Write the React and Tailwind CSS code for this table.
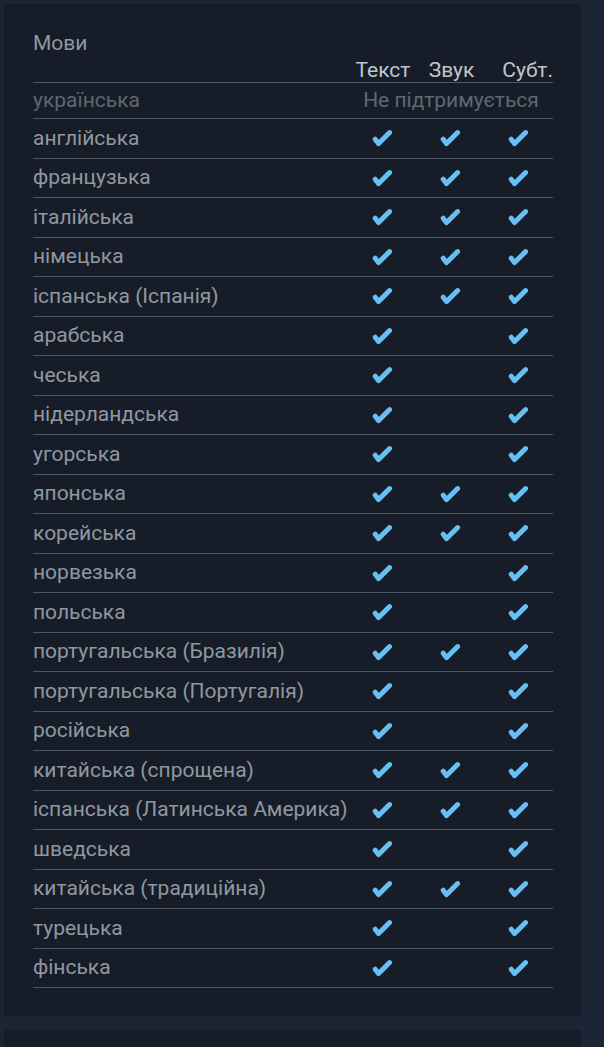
import React from 'react';

const rows = [
  ['англійська', true, true, true],
  ['французька', true, true, true],
  ['італійська', true, true, true],
  ['німецька', true, true, true],
  ['іспанська (Іспанія)', true, true, true],
  ['арабська', true, false, true],
  ['чеська', true, false, true],
  ['нідерландська', true, false, true],
  ['угорська', true, false, true],
  ['японська', true, true, true],
  ['корейська', true, true, true],
  ['норвезька', true, false, true],
  ['польська', true, false, true],
  ['португальська (Бразилія)', true, true, true],
  ['португальська (Португалія)', true, false, true],
  ['російська', true, false, true],
  ['китайська (спрощена)', true, true, true],
  ['іспанська (Латинська Америка)', true, true, true],
  ['шведська', true, false, true],
  ['китайська (традиційна)', true, true, true],
  ['турецька', true, false, true],
  ['фінська', true, false, true],
];

const Check = ({ on }) => (
  <div className="flex items-center justify-center">
    {on && (
      <svg width="21" height="18" viewBox="0 0 21 18" className="-ml-[2px]">
        <path
          d="M3.2 10.2 L6.6 14.6 L17.6 3.6"
          stroke="#66c0f4"
          strokeWidth="5"
          strokeLinecap="round"
          strokeLinejoin="round"
          fill="none"
        />
      </svg>
    )}
  </div>
);

export default function App() {
  return (
    <div className="min-h-[1047px] bg-[#1b2535] pt-[4px] pl-[4px] font-['Roboto',sans-serif] overflow-hidden">
      <div className="w-[577px] bg-[#171d28] pt-[27px] pb-[28px] px-[29px]">
        <div className="text-[21px] leading-[24px] text-[#8f98a0]">Мови</div>

        {/* table header */}
        <div className="grid grid-cols-[1fr_68px_69px_67px] w-[520px] border-b border-[#4d5764] h-[28px] items-center text-[21px] text-[#c0c6cc]">
          <div />
          <div className="text-center">Текст</div>
          <div className="text-center">Звук</div>
          <div className="text-right">Субт.</div>
        </div>

        <div className="grid grid-cols-[1fr_204px] w-[520px] border-b border-[#4d5764] h-[36px] items-center text-[21px] text-[#5e6873]">
          <div>українська</div>
          <div className="text-center">Не підтримується</div>
        </div>

        {rows.map(([name, t, s, sub]) => (
          <div
            key={name}
            className="grid grid-cols-[1fr_68px_69px_67px] w-[520px] border-b border-[#4d5764] h-[39.5px] items-center text-[21px] text-[#8f98a0]"
          >
            <div className="whitespace-nowrap">{name}</div>
            <Check on={t} />
            <Check on={s} />
            <Check on={sub} />
          </div>
        ))}
      </div>
      <div className="w-[577px] h-[40px] bg-[#171d28] mt-[14px]" />
    </div>
  );
}
